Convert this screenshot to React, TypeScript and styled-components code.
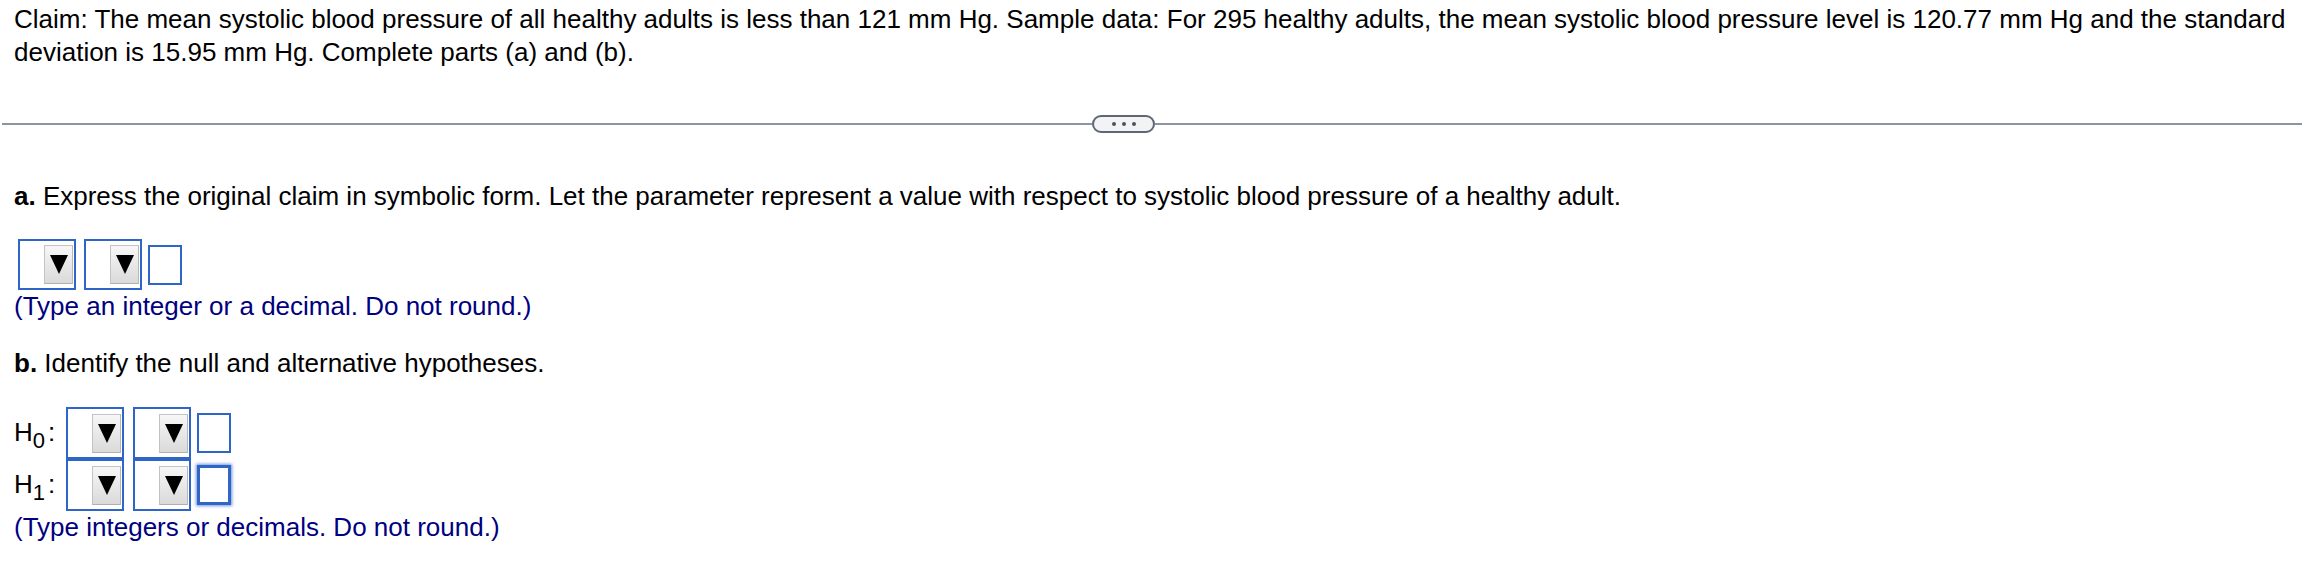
import React from "react";
import styled, { createGlobalStyle } from "styled-components";

const Global = createGlobalStyle`
  html, body { margin: 0; padding: 0; background: #ffffff; }
  body { font-family: "Liberation Sans", Arial, sans-serif; color: #000; }
`;

const Page = styled.div`
  width: 2314px;
  min-height: 580px;
  box-sizing: border-box;
  padding-top: 3px;
`;

const Problem = styled.p`
  margin: 0;
  padding: 0 20px 0 14px;
  font-size: 26px;
  line-height: 33px;
`;

const Divider = styled.div`
  display: grid;
  grid-template-columns: 1090px 63px 1147px;
  align-items: center;
  margin: 46px 0 0 2px;
  height: 18px;
`;

const Rule = styled.div`
  height: 2px;
  background: #8b95a3;
`;

const Pill = styled.div`
  box-sizing: border-box;
  height: 18px;
  border: 2px solid #5d6775;
  border-radius: 9px;
  background: #f1f3f5;
  display: flex;
  align-items: center;
  justify-content: center;
  gap: 6px;
`;

const Dot = styled.span`
  width: 4px;
  height: 4px;
  border-radius: 50%;
  background: #4d535b;
`;

const Prompt = styled.p<{ $top: number }>`
  margin: ${(p) => p.$top}px 0 0 0;
  padding-left: 14px;
  font-size: 26px;
  line-height: 33px;
`;

const Hint = styled.p<{ $top: number }>`
  margin: ${(p) => p.$top}px 0 0 0;
  padding-left: 14px;
  font-size: 26px;
  line-height: 33px;
  color: #000080;
`;

const AnswerRow = styled.div`
  display: flex;
  align-items: center;
  margin: 26px 0 0 18px;
  height: 51px;
`;

const SelectBox = styled.div<{ $gap: number; $tall?: boolean }>`
  box-sizing: border-box;
  width: 58px;
  height: ${(p) => (p.$tall ? 52 : 51)}px;
  border: 2px solid #3065c8;
  background: #fff;
  display: flex;
  align-items: center;
  justify-content: flex-end;
  padding-right: 1px;
  margin-right: ${(p) => p.$gap}px;
`;

const ArrowButton = styled.div`
  box-sizing: border-box;
  width: 29px;
  height: 39px;
  border: 1px solid #c3c3c3;
  border-bottom-color: #b0b0b0;
  border-right-color: #b8b8b8;
  background: linear-gradient(#f7f7f7, #dadada);
  display: flex;
  align-items: center;
  justify-content: center;
`;

const TextBox = styled.div<{ $focused?: boolean }>`
  box-sizing: border-box;
  width: 34px;
  height: 40px;
  border: ${(p) => (p.$focused ? "3px" : "2px")} solid #3065c8;
  background: #fff;
  box-shadow: ${(p) => (p.$focused ? "0 0 3px 1px rgba(48,101,200,0.7)" : "none")};
`;

const HypTable = styled.div`
  margin: 27px 0 0 0;
  display: flex;
  flex-direction: column;
`;

const HypRow = styled.div`
  display: flex;
  align-items: center;
  height: 52px;
`;

const HLabel = styled.div`
  width: 52px;
  padding-left: 14px;
  font-size: 26px;
  line-height: 33px;
  white-space: nowrap;
`;

const Sub = styled.span`
  font-size: 22px;
  position: relative;
  top: 7px;
  margin-right: 3px;
`;

const Arrow = () => (
  <svg width="18" height="19" viewBox="0 0 18 19">
    <polygon points="0,0 18,0 9,19" fill="#000" />
  </svg>
);

const Dropdown = ({ gap, tall }: { gap: number; tall?: boolean }) => (
  <SelectBox $gap={gap} $tall={tall}>
    <ArrowButton>
      <Arrow />
    </ArrowButton>
  </SelectBox>
);

export default function App() {
  return (
    <>
      <Global />
      <Page>
        <Problem>
          Claim: The mean systolic blood pressure of all healthy adults is less than 121 mm Hg. Sample data: For 295
          healthy adults, the mean systolic blood pressure level is 120.77 mm Hg and the standard deviation is 15.95 mm
          Hg. Complete parts (a) and (b).
        </Problem>
        <Divider>
          <Rule />
          <Pill>
            <Dot />
            <Dot />
            <Dot />
          </Pill>
          <Rule />
        </Divider>
        <Prompt $top={47}>
          <b>a.</b> Express the original claim in symbolic form. Let the parameter represent a value with respect to
          systolic blood pressure of a healthy adult.
        </Prompt>
        <AnswerRow>
          <Dropdown gap={8} />
          <Dropdown gap={6} />
          <TextBox />
        </AnswerRow>
        <Hint $top={0}>(Type an integer or a decimal. Do not round.)</Hint>
        <Prompt $top={24}>
          <b>b.</b> Identify the null and alternative hypotheses.
        </Prompt>
        <HypTable>
          <HypRow>
            <HLabel>
              H<Sub>0</Sub>:
            </HLabel>
            <Dropdown gap={9} tall />
            <Dropdown gap={6} tall />
            <TextBox />
          </HypRow>
          <HypRow>
            <HLabel>
              H<Sub>1</Sub>:
            </HLabel>
            <Dropdown gap={9} tall />
            <Dropdown gap={6} tall />
            <TextBox $focused />
          </HypRow>
        </HypTable>
        <Hint $top={0}>(Type integers or decimals. Do not round.)</Hint>
      </Page>
    </>
  );
}
